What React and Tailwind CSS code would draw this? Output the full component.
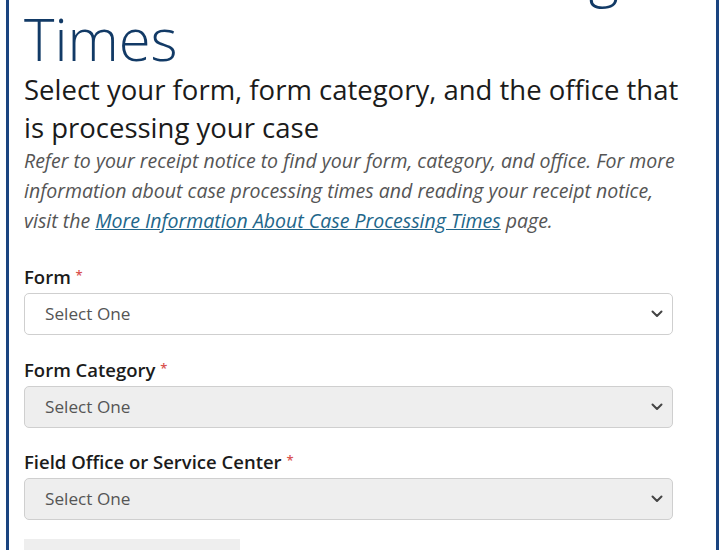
import React from "react";

function Chevron() {
  return (
    <svg width="12" height="8" viewBox="0 0 12 8" className="absolute right-[9px] top-1/2 -translate-y-1/2">
      <path d="M1.5 1.5 L6 6 L10.5 1.5" fill="none" stroke="#444" strokeWidth="2" strokeLinecap="round" strokeLinejoin="round" />
    </svg>
  );
}

function Field({ label, disabled }) {
  return (
    <div className="flex flex-col">
      <div className="text-[18.5px] leading-[22px] font-semibold text-[#1b1b1b] mb-[5px] whitespace-nowrap">
        {label} <span className="text-[#d9534f] text-[13px] align-top relative top-[-2px]">*</span>
      </div>
      <div
        className={`relative h-[42px] w-[649px] rounded-[5px] border border-[#cfcfcf] ${disabled ? "bg-[#eeeeee]" : "bg-white"} flex items-center pl-[20px] text-[17.2px] text-[#555]`}
      >
        Select One
        <Chevron />
      </div>
    </div>
  );
}

export default function App() {
  return (
    <div className="w-[723px] h-[550px] overflow-hidden bg-white" style={{ fontFamily: "'Open Sans', Lato, sans-serif" }}>
      <div className="ml-[6px] w-[713px] border-x-[3px] border-[#1a4480] mt-[-60px] pl-[15px] pr-[36px] pb-[40px]">
        <h1 className="text-[58px] leading-[66px] font-light text-[#123a66]">
          Check Case Processing Times
        </h1>
        <h2 className="text-[27.5px] leading-[38px] text-[#1b1b1b] mt-[-1px]">
          Select your form, form category, and the office that is processing your case
        </h2>
        <p className="italic text-[19.5px] leading-[30px] text-[#555] mt-[-1px]">
          Refer to your receipt notice to find your form, category, and office. For more information about case processing times and reading your receipt notice, visit the{" "}
          <a className="underline text-[#22668a]">More Information About Case Processing Times</a> page.
        </p>
        <div className="flex flex-col gap-[23.5px] mt-[30px]">
          <Field label="Form" />
          <Field label="Form Category" disabled />
          <Field label="Field Office or Service Center" disabled />
        </div>
        <div className="mt-[19px] w-[216px] h-[44px] bg-[#eeeeee]" />
      </div>
    </div>
  );
}
